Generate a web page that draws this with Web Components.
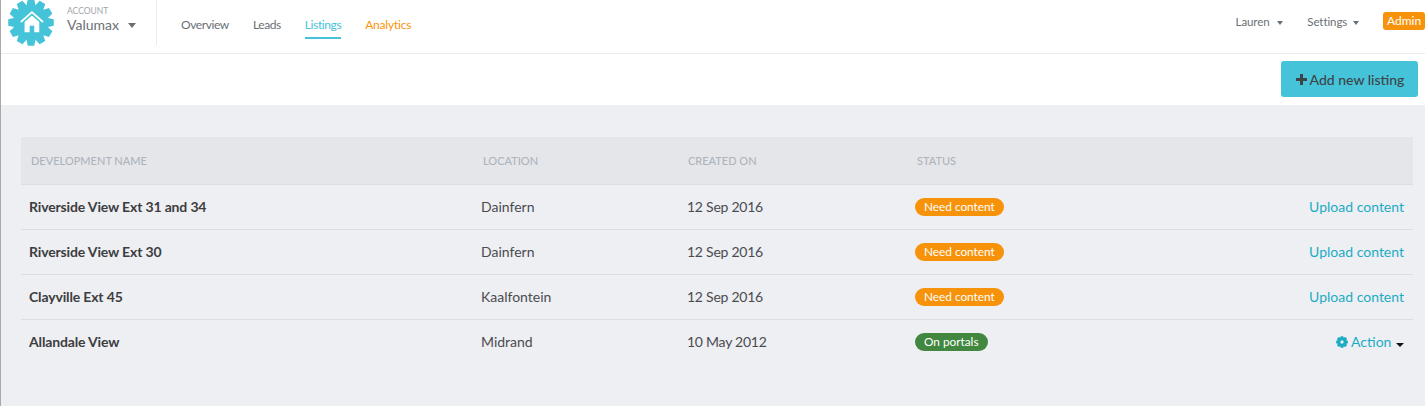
<!DOCTYPE html>
<html>
<head>
<meta charset="utf-8">
<title>Listings</title>
<style>
  html, body { margin: 0; height: 100%; }
  body {
    background: #eeeff3;
    color: #3d3d3f;
    font-family: Lato, "Liberation Sans", sans-serif;
    overflow: hidden;
  }
</style>
</head>
<body>
<app-shell>
  <top-nav></top-nav>
  <action-bar></action-bar>
  <listing-table>
    <listing-row name="Riverside View Ext 31 and 34" location="Dainfern" created="12 Sep 2016" status="Need content"></listing-row>
    <listing-row name="Riverside View Ext 30" location="Dainfern" created="12 Sep 2016" status="Need content"></listing-row>
    <listing-row name="Clayville Ext 45" location="Kaalfontein" created="12 Sep 2016" status="Need content"></listing-row>
    <listing-row name="Allandale View" location="Midrand" created="10 May 2012" status="On portals" action="menu"></listing-row>
  </listing-table>
</app-shell>
<script>
const GEAR_PATH = 'M' + gearPoints(12, 50, 50, 50, 38).join('L') + 'Z';

// gear outline, teeth are trapezoids round the centre
function gearPoints(teeth, cx, cy, outer, inner) {
  const pts = [];
  const step = Math.PI * 2 / teeth;
  for (let i = 0; i < teeth; i++) {
    const a = i * step - Math.PI / 2;
    const corners = [[inner, -0.5], [outer, -0.27], [outer, 0.27], [inner, 0.5]];
    corners.forEach(([r, t]) => {
      const x = cx + r * Math.cos(a + t * step);
      const y = cy + r * Math.sin(a + t * step);
      pts.push(x.toFixed(1) + ' ' + y.toFixed(1));
    });
  }
  return pts;
}

class AppShell extends HTMLElement {
  connectedCallback() {
    this.attachShadow({ mode: 'open' });
    this.shadowRoot.innerHTML = `
      <style>
        :host {
          display: flex;
          flex-direction: column;
          height: 100vh;
          box-sizing: border-box;
          border-left: 1px solid #a9a9a9;
        }
      </style>
      <slot></slot>
    `;
  }
}

class TopNav extends HTMLElement {
  connectedCallback() {
    this.attachShadow({ mode: 'open' });
    this.shadowRoot.innerHTML = `
      <style>
        :host {
          display: flex;
          align-items: flex-start;
          height: 53px;
          background: #fff;
          border-bottom: 1px solid #eaebee;
          color: #6a6f75;
          font-size: 12px;
        }
        .logo { width: 46px; height: 47px; margin: -1px 0 0 7px; flex: none; }
        .account {
          width: 89px;
          height: 45px;
          margin-left: 13px;
          border-right: 1px solid #eaebee;
          flex: none;
        }
        .account small { display: block; font-size: 8.5px; line-height: 10px; margin-top: 6px; color: #a2a6ab; }
        .account b { display: block; font-weight: 400; font-size: 14px; line-height: 17px; }
        .caret {
          display: inline-block;
          border: 4px solid transparent;
          border-top-color: currentColor;
          border-bottom: 0;
          vertical-align: middle;
        }
        .account .caret { border-width: 5px 4px 0; margin: 0 0 2px 5px; }
        nav { display: flex; gap: 24px; margin-left: 24px; }
        nav a { display: block; line-height: 14px; padding: 18px 0 5px; letter-spacing: -.4px; }
        nav a.active { color: #45c3d9; border-bottom: 2px solid #45c3d9; }
        nav a.hot { color: #f7930a; letter-spacing: -.2px; }
        .right { display: flex; margin-left: auto; align-items: center; height: 18px; margin-top: 12px; }
        .right span.item { font-size: 11.5px; letter-spacing: -.1px; }
        .right .caret { border-width: 4px 3.5px 0; margin-left: 3px; }
        .right .lauren .caret { margin-left: 5px; }
        .right .settings { margin-left: 24px; }
        .admin {
          margin-left: 24px;
          background: #f7930a;
          color: #fff;
          border-radius: 3px;
          font-size: 12px;
          line-height: 18px;
          padding: 0 4px;
          width: 42px;
          box-sizing: border-box;
          white-space: nowrap;
        }
      </style>
      <svg class="logo" viewBox="0 0 100 100" preserveAspectRatio="none">
        <path fill="#45c3d9" d="${GEAR_PATH}"/>
        <path fill="none" stroke="#fff" stroke-width="4" d="M28 49 L52 28 L76 49"/>
        <path fill="#fff" d="M36 49 L52 35 L68 49 V71 H57 V57 H47 V71 H36 Z"/>
      </svg>
      <div class="account">
        <small>ACCOUNT</small>
        <b>Valumax <i class="caret"></i></b>
      </div>
      <nav>
        <a>Overview</a>
        <a>Leads</a>
        <a class="active">Listings</a>
        <a class="hot">Analytics</a>
      </nav>
      <div class="right">
        <span class="item lauren">Lauren <i class="caret"></i></span>
        <span class="item settings">Settings <i class="caret"></i></span>
        <span class="admin">Admin</span>
      </div>
    `;
  }
}

class ActionBar extends HTMLElement {
  connectedCallback() {
    this.attachShadow({ mode: 'open' });
    this.shadowRoot.innerHTML = `
      <style>
        :host {
          display: flex;
          justify-content: flex-end;
          align-items: flex-start;
          height: 51px;
          box-sizing: border-box;
          padding: 7px 7px 0 0;
          background: #fff;
        }
        button {
          display: flex;
          align-items: center;
          justify-content: center;
          gap: 3px;
          width: 137px;
          height: 36px;
          padding: 0 0 0 1px;
          border: 0;
          border-radius: 3px;
          background: #45c3d9;
          color: #3d4448;
          font: 500 14px Lato, "Liberation Sans", sans-serif;
        }
        svg { width: 11px; height: 11px; }
      </style>
      <button>
        <svg viewBox="0 0 11 11"><path fill="#3d4448" d="M4 0h3v4h4v3H7v4H4V7H0V4h4z"/></svg>
        Add new listing
      </button>
    `;
  }
}

class ListingTable extends HTMLElement {
  connectedCallback() {
    this.attachShadow({ mode: 'open' });
    this.shadowRoot.innerHTML = `
      <style>
        :host { display: block; margin: 32px 12px 0 20px; }
        .head {
          display: grid;
          grid-template-columns: 452px 205px 229px 1fr;
          height: 47px;
          align-items: center;
          padding-left: 10px;
          background: #e5e6ea;
          border-bottom: 1px solid #dcdde1;
          color: #aeb4bc;
          font-size: 11px;
          font-weight: 500;
        }
      </style>
      <div class="head">
        <span>DEVELOPMENT NAME</span>
        <span>LOCATION</span>
        <span>CREATED ON</span>
        <span>STATUS</span>
      </div>
      <slot></slot>
    `;
  }
}

class ListingRow extends HTMLElement {
  connectedCallback() {
    const status = this.getAttribute('status');
    const isMenu = this.getAttribute('action') === 'menu';
    this.attachShadow({ mode: 'open' });
    this.shadowRoot.innerHTML = `
      <style>
        :host {
          display: grid;
          grid-template-columns: 452px 206px 228px 1fr auto;
          align-items: center;
          height: 45px;
          box-sizing: border-box;
          padding: 0 9px 2px 8px;
          font-size: 14px;
          color: #4a4b4f;
          border-bottom: 1px solid #dcdde1;
        }
        :host(:last-child) { border-bottom: 0; }
        .name { font-weight: 700; color: #3d3d3f; letter-spacing: -.15px; }
        .created { letter-spacing: -.25px; }
        .badge {
          display: inline-block;
          height: 18px;
          line-height: 18px;
          padding: 0 9px;
          border-radius: 9px;
          font-size: 11.8px;
          color: #fff;
          background: #f7930a;
        }
        .badge.ok { background: #41873f; }
        a { color: #1bacc4; }
        .caret {
          display: inline-block;
          border: 4px solid transparent;
          border-top-color: #111;
          border-bottom: 0;
          margin-left: 1px;
          margin-top: 3px;
          vertical-align: middle;
        }
        .gear { width: 12px; height: 12px; vertical-align: -1px; }
      </style>
      <span class="name">${this.getAttribute('name')}</span>
      <span class="location">${this.getAttribute('location')}</span>
      <span class="created">${this.getAttribute('created')}</span>
      <span><span class="badge ${status === 'On portals' ? 'ok' : ''}">${status}</span></span>
      ${isMenu
        ? `<a><svg class="gear" viewBox="0 0 100 100"><path fill="#1bacc4" fill-rule="evenodd" d="${'M' + gearPoints(8, 50, 50, 50, 38).join('L') + 'Z'} M50 36a14 14 0 1 0 .01 0Z"/></svg> Action <i class="caret"></i></a>`
        : `<a>Upload content</a>`}
    `;
  }
}

customElements.define('app-shell', AppShell);
customElements.define('top-nav', TopNav);
customElements.define('action-bar', ActionBar);
customElements.define('listing-table', ListingTable);
customElements.define('listing-row', ListingRow);
</script>
</body>
</html>
